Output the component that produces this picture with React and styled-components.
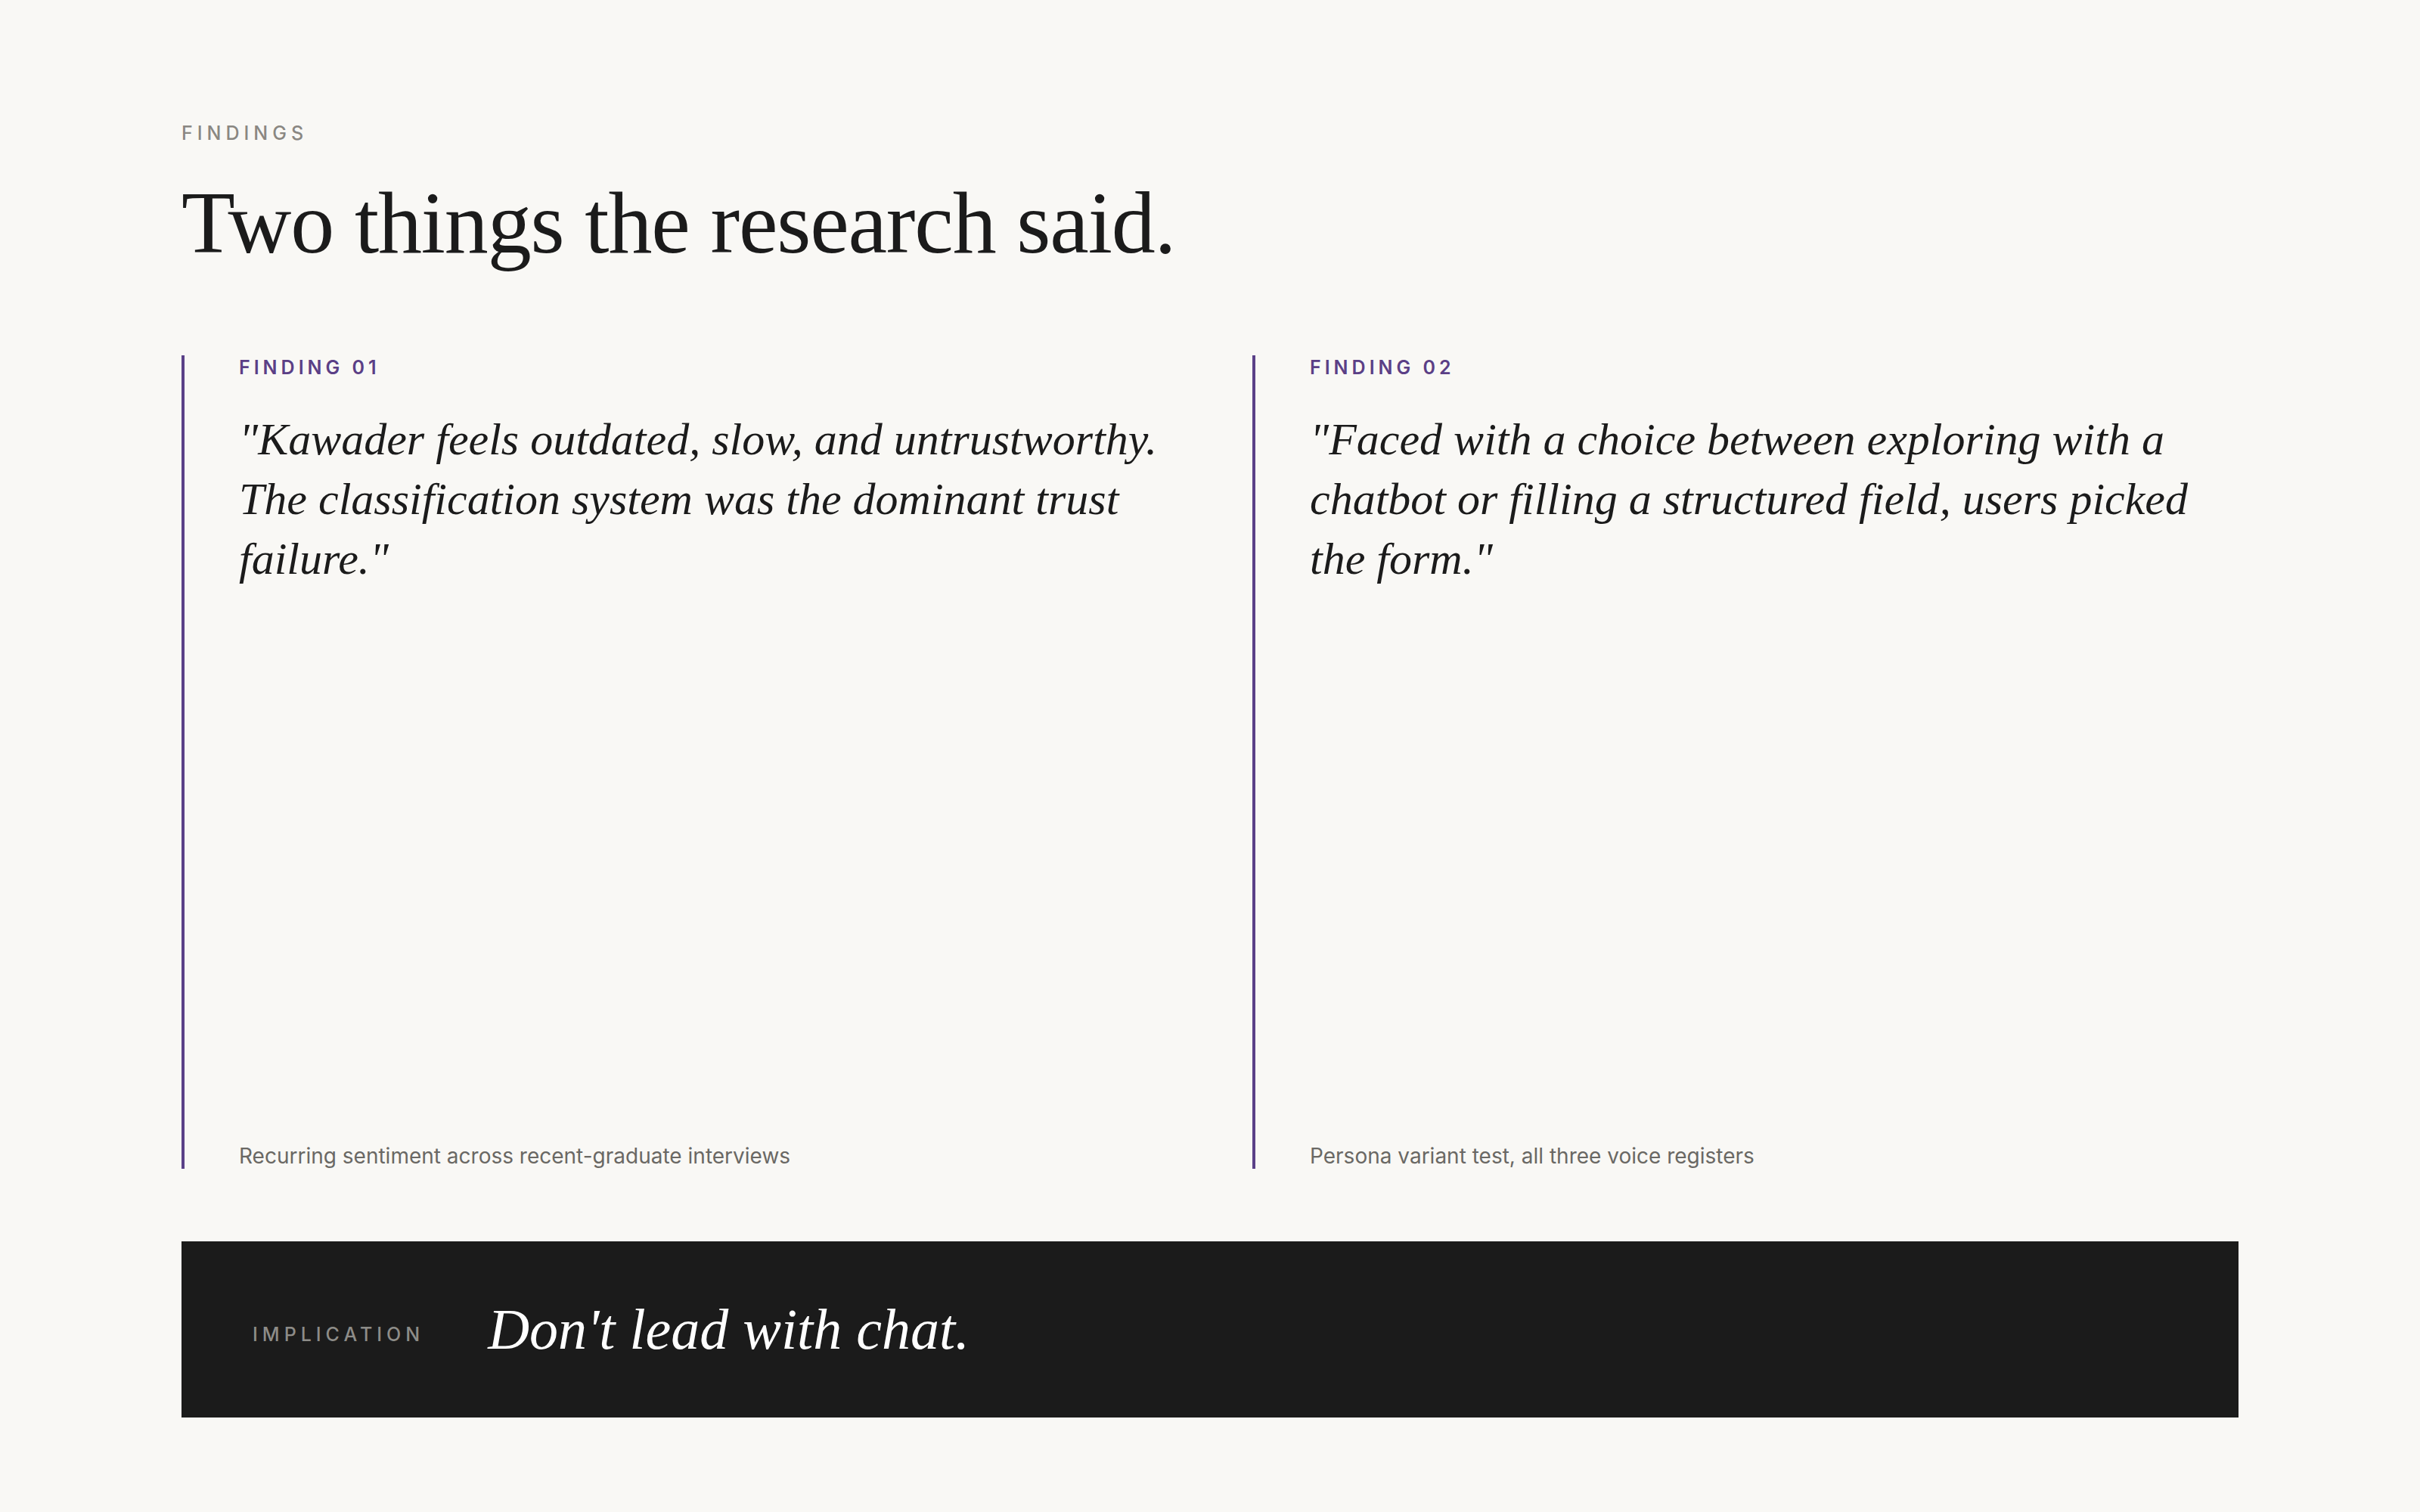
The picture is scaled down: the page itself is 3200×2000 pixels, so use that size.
import React from "react";
import styled, { createGlobalStyle } from "styled-components";

const Global = createGlobalStyle`
  html, body { margin: 0; padding: 0; background: #f9f8f5; }
`;

const Page = styled.main`
  box-sizing: border-box;
  width: 3200px;
  min-height: 2000px;
  padding: 160px 240px 0 240px;
  background: #f9f8f5;
  font-family: Inter, "Liberation Sans", sans-serif;
`;

const Eyebrow = styled.div`
  font-size: 25px;
  font-weight: 500;
  letter-spacing: 0.24em;
  color: #8a8782;
  line-height: 32px;
`;

const Title = styled.h1`
  margin: 40px 0 0 0;
  font-family: "Liberation Serif", serif;
  font-weight: 400;
  font-size: 116px;
  line-height: 1.1;
  color: #1b1b1b;
  letter-spacing: -0.01em;
`;

const Grid = styled.section`
  display: grid;
  grid-template-columns: 1fr 1fr;
  column-gap: 112px;
  margin-top: 110px;
`;

const Finding = styled.article`
  display: flex;
  flex-direction: column;
  border-left: 4px solid #5b4188;
  padding-left: 72px;
  height: 1076px;
  box-sizing: border-box;
`;

const Tag = styled.div`
  font-size: 25px;
  font-weight: 600;
  letter-spacing: 0.2em;
  color: #5b3f86;
  line-height: 32px;
`;

const Quote = styled.blockquote`
  margin: 40px 0 0 0;
  font-family: "Liberation Serif", serif;
  font-style: italic;
  font-size: 60px;
  line-height: 79px;
  color: #1b1b1b;
`;

const Source = styled.div`
  margin-top: auto;
  font-size: 28px;
  color: #6a6864;
  line-height: 34px;
`;

const Implication = styled.section`
  display: flex;
  align-items: center;
  gap: 84px;
  margin-top: 96px;
  height: 233px;
  padding: 0 94px;
  background: #1b1b1b;
`;

const ImpLabel = styled.div`
  font-size: 25px;
  font-weight: 500;
  letter-spacing: 0.24em;
  color: #8d8c88;
  padding-top: 14px;
`;

const ImpText = styled.div`
  font-family: "Liberation Serif", serif;
  font-style: italic;
  font-size: 76px;
  color: #ffffff;
`;

const findings = [
  {
    tag: "FINDING 01",
    quote: "\"Kawader feels outdated, slow, and untrustworthy. The classification system was the dominant trust failure.\"",
    source: "Recurring sentiment across recent-graduate interviews",
  },
  {
    tag: "FINDING 02",
    quote: "\"Faced with a choice between exploring with a chatbot or filling a structured field, users picked the form.\"",
    source: "Persona variant test, all three voice registers",
  },
];

export default function App() {
  return (
    <Page>
      <Global />
      <Eyebrow>FINDINGS</Eyebrow>
      <Title>Two things the research said.</Title>
      <Grid>
        {findings.map((f) => (
          <Finding key={f.tag}>
            <Tag>{f.tag}</Tag>
            <Quote>{f.quote}</Quote>
            <Source>{f.source}</Source>
          </Finding>
        ))}
      </Grid>
      <Implication>
        <ImpLabel>IMPLICATION</ImpLabel>
        <ImpText>Don't lead with chat.</ImpText>
      </Implication>
    </Page>
  );
}
